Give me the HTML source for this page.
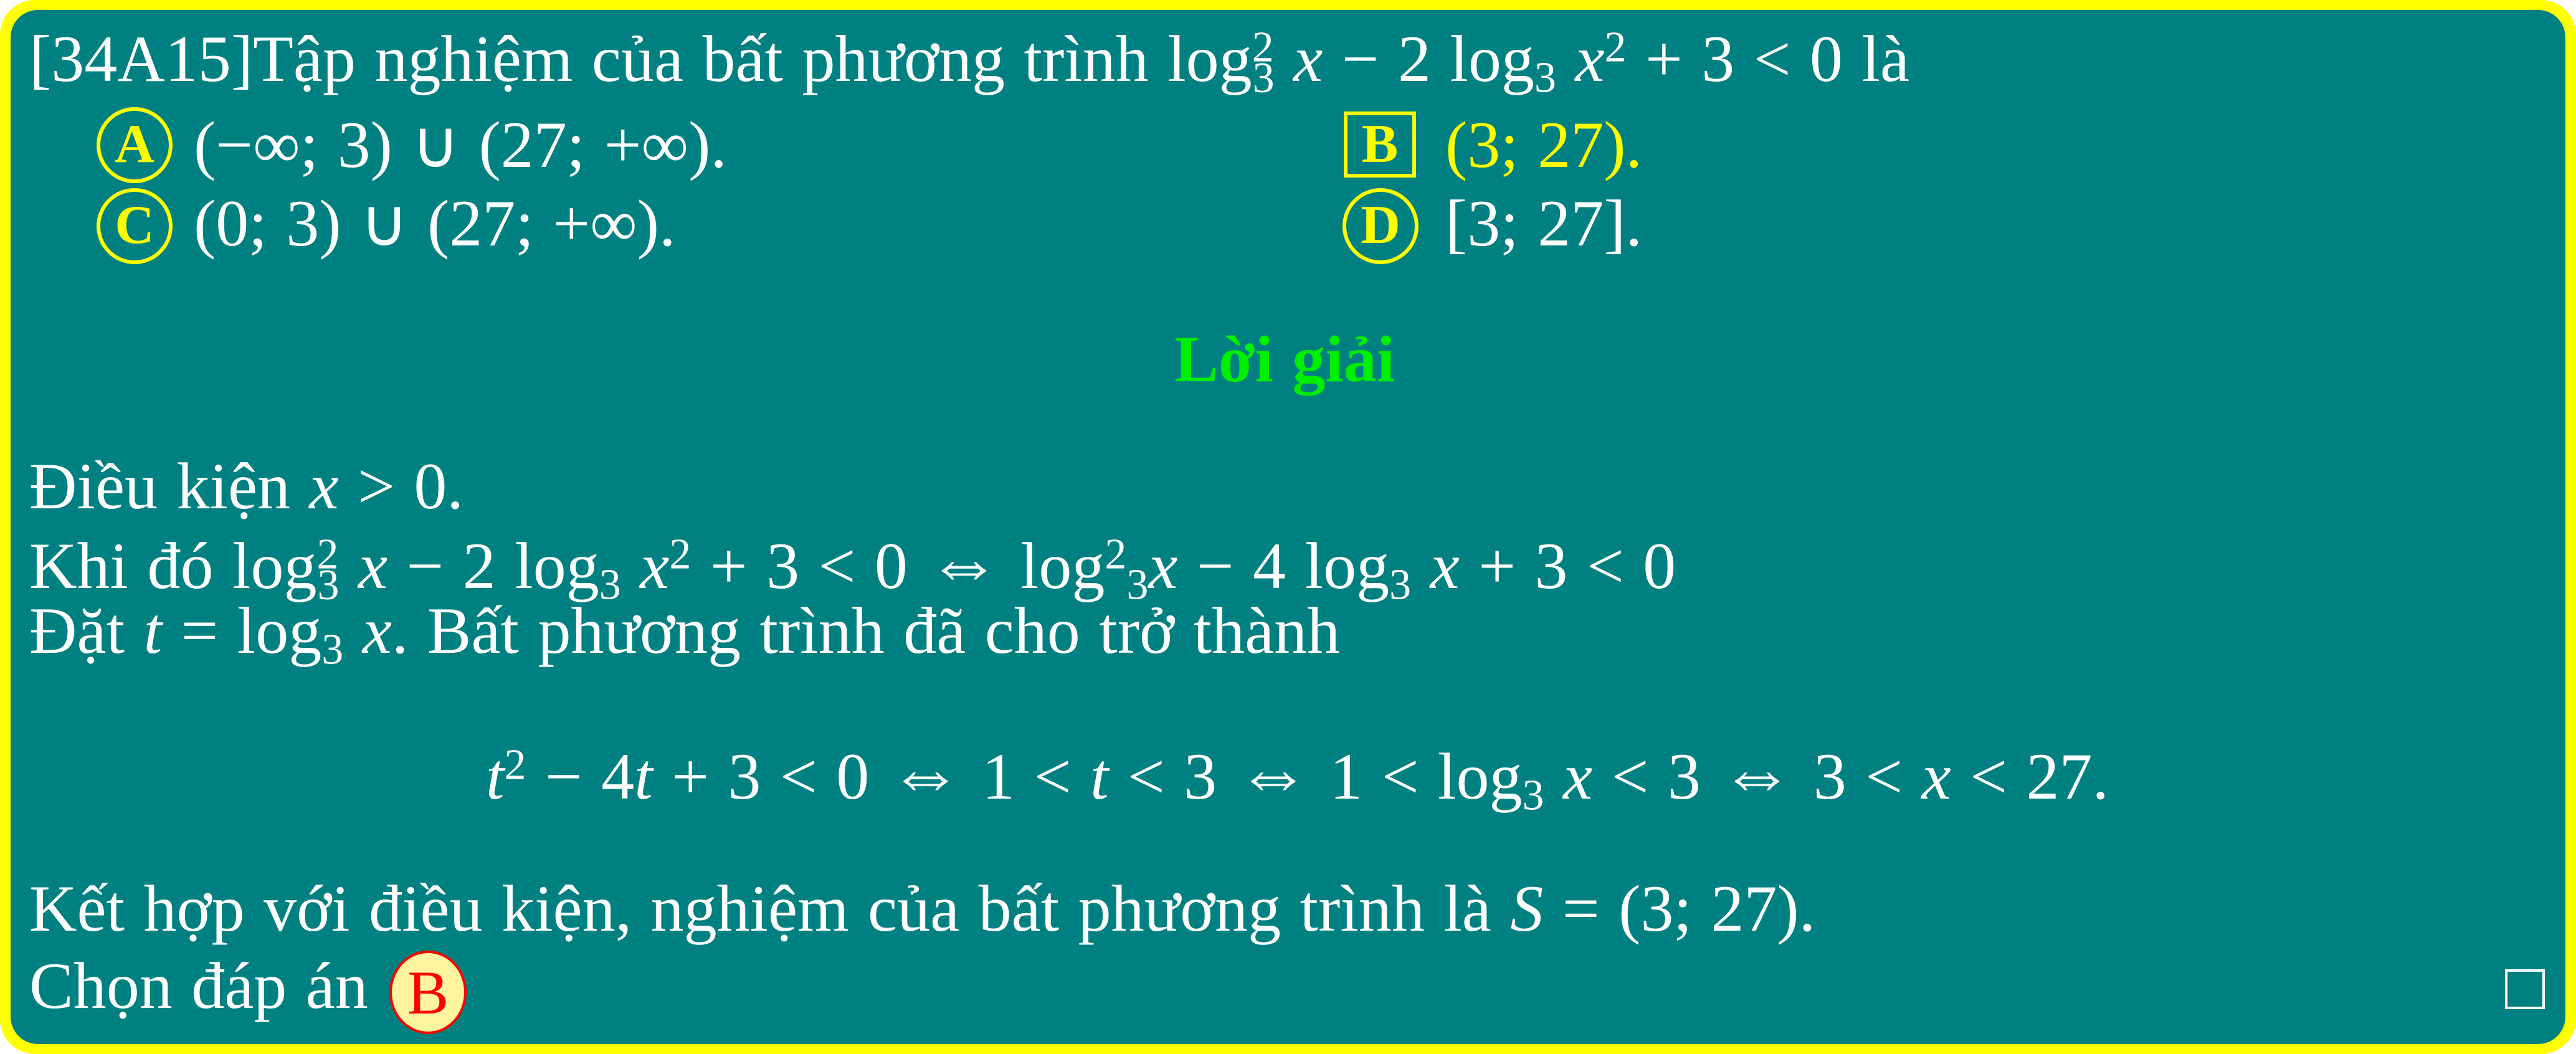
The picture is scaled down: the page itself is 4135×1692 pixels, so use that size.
<!DOCTYPE html>
<html><head><meta charset="utf-8"><style>
html,body{margin:0;padding:0;}
body{width:4135px;height:1692px;position:relative;overflow:hidden;background:#fff;font-family:"Liberation Serif",serif;color:#fff;}
.outer{position:absolute;left:0;top:0;width:4135px;height:1692px;background:#ffff00;border-radius:56px;}
.inner{position:absolute;left:17px;top:16px;width:4101px;height:1660px;background:#008080;border-radius:44px;}
.l{position:absolute;white-space:nowrap;font-size:106px;line-height:1;word-spacing:4px;}
i{font-style:italic;}
sup,sub{font-size:70px;line-height:0;}
sup{vertical-align:0.45em;}
sub{vertical-align:-0.25em;}
.a{font-size:120px;}
.circ{position:absolute;border:6px solid #ffff00;border-radius:50%;box-sizing:border-box;color:#ffff00;font-weight:bold;font-size:88px;text-align:center;}
.box{position:absolute;border:6px solid #ffff00;box-sizing:border-box;color:#ffff00;font-weight:bold;font-size:88px;text-align:center;}
</style></head><body>
<div class="outer"></div>
<div class="inner"></div>

<div class="l" style="left:47px;top:42px;">[34A15]Tập nghiệm của bất phương trình log<sup>2</sup><sub style="margin-left:-34px">3</sub> <i>x</i> − 2 log<sub>3</sub> <i>x</i><sup>2</sup> + 3 &lt; 0 là</div>

<div class="circ" style="left:155px;top:172px;width:122px;height:122px;line-height:108px;">A</div>
<div class="l" style="left:311px;top:180px;">(−∞; 3) ∪ (27; +∞).</div>
<div class="box" style="left:2157px;top:179px;width:116px;height:106px;line-height:94px;">B</div>
<div class="l" style="left:2320px;top:180px;color:#ffff00;">(3; 27).</div>

<div class="circ" style="left:155px;top:302px;width:122px;height:122px;line-height:108px;">C</div>
<div class="l" style="left:311px;top:306px;">(0; 3) ∪ (27; +∞).</div>
<div class="circ" style="left:2155px;top:302px;width:122px;height:122px;line-height:108px;">D</div>
<div class="l" style="left:2320px;top:306px;">[3; 27].</div>

<div class="l" style="left:1885px;top:524px;color:#00ee00;font-weight:bold;">Lời giải</div>

<div class="l" style="left:47px;top:728px;">Điều kiện <i>x</i> &gt; 0.</div>
<div class="l" style="left:47px;top:844px;">Khi đó log<sup>2</sup><sub style="margin-left:-34px">3</sub> <i>x</i> − 2 log<sub>3</sub> <i>x</i><sup>2</sup> + 3 &lt; 0 <span class="a">⇔</span> log<sup>2</sup><sub>3</sub><i>x</i> − 4 log<sub>3</sub> <i>x</i> + 3 &lt; 0</div>
<div class="l" style="left:47px;top:960px;">Đặt <i>t</i> = log<sub>3</sub> <i>x</i>. Bất phương trình đã cho trở thành</div>

<div class="l" style="left:780px;top:1182px;"><i>t</i><sup>2</sup> − 4<i>t</i> + 3 &lt; 0 <span class="a">⇔</span> 1 &lt; <i>t</i> &lt; 3 <span class="a">⇔</span> 1 &lt; log<sub>3</sub> <i>x</i> &lt; 3 <span class="a">⇔</span> 3 &lt; <i>x</i> &lt; 27.</div>

<div class="l" style="left:47px;top:1406px;">Kết hợp với điều kiện, nghiệm của bất phương trình là <i>S</i> = (3; 27).</div>
<div class="l" style="left:47px;top:1530px;">Chọn đáp án</div>
<div style="position:absolute;left:625px;top:1526px;width:124px;height:134px;border:4px solid #ff0000;border-radius:50%;background:#fff5a0;box-sizing:border-box;color:#ff0000;font-size:100px;text-align:center;line-height:128px;">B</div>

<div style="position:absolute;left:4021px;top:1556px;width:64px;height:64px;border:4px solid #fff;box-sizing:border-box;"></div>
</body></html>
